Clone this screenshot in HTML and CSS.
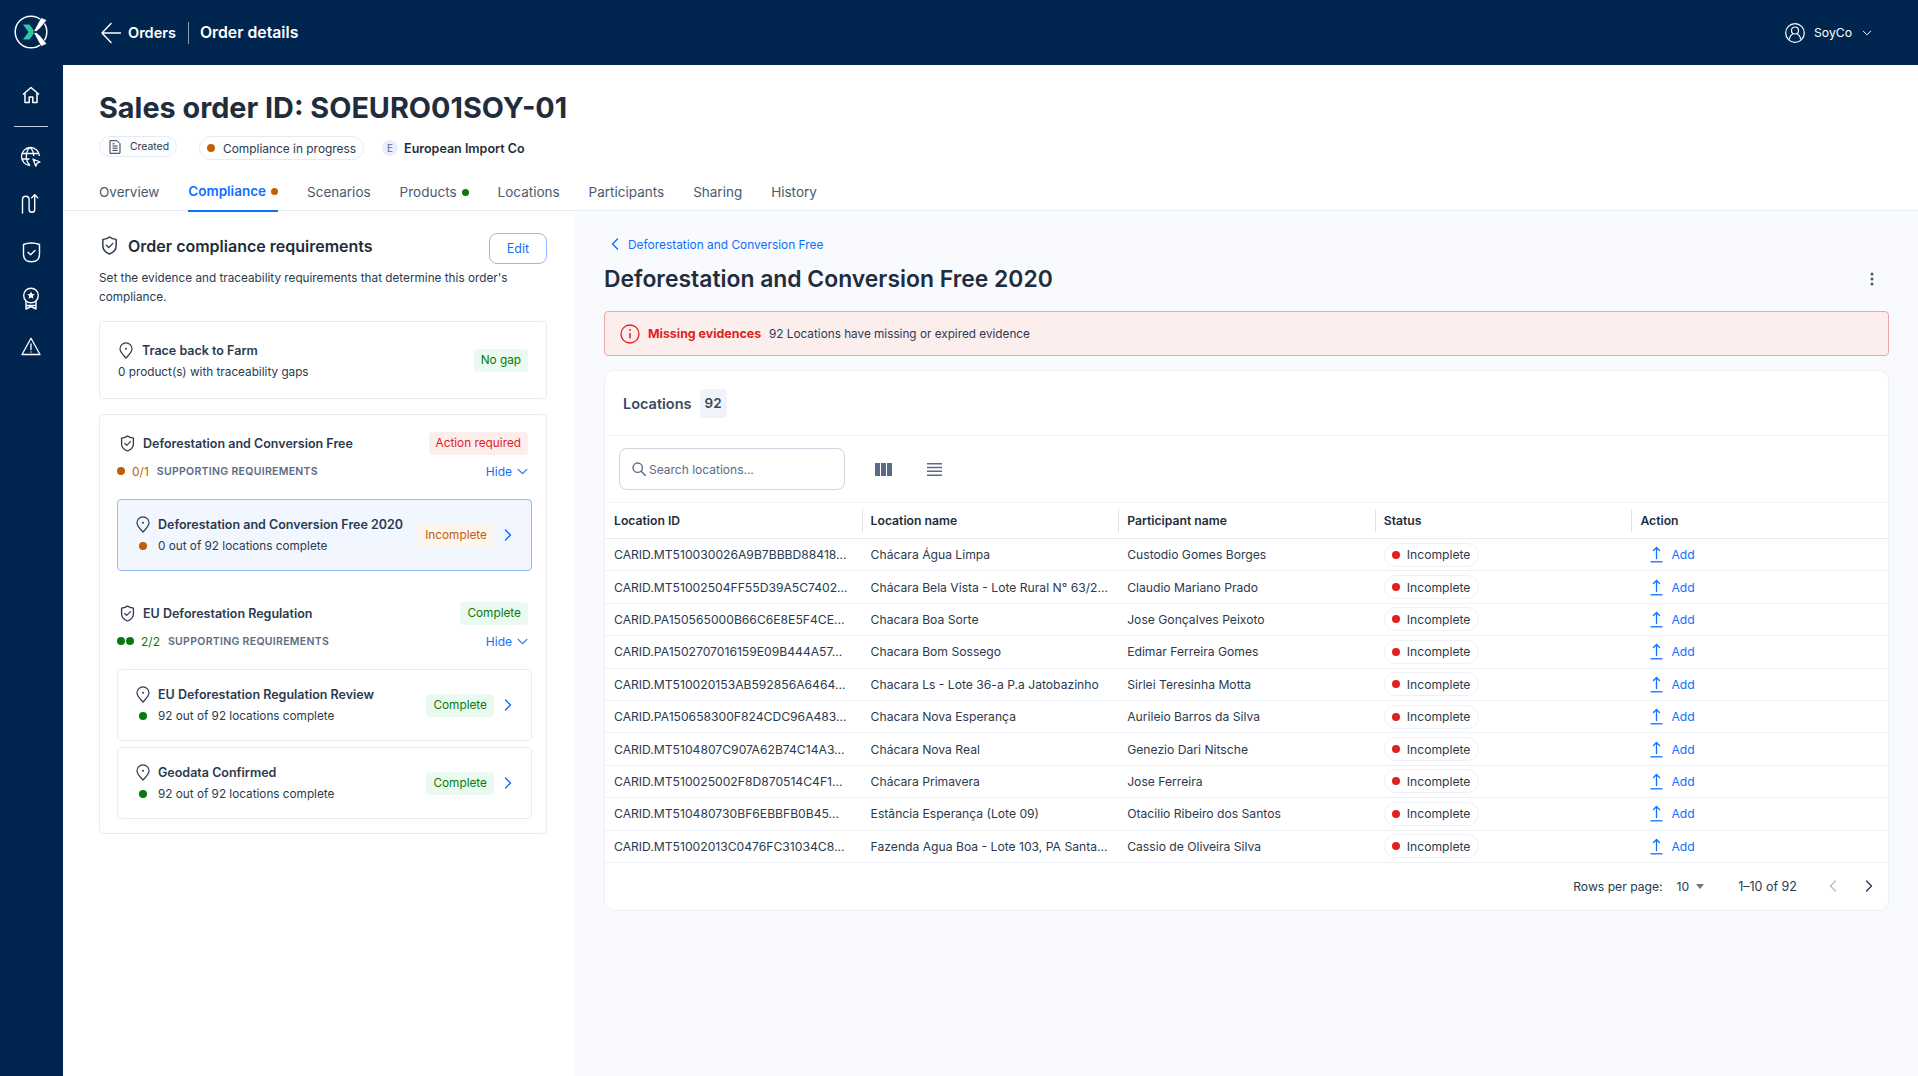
FILE: index.html
```html
<!DOCTYPE html>
<html lang="en">
<head>
    <meta charset="UTF-8">
    <meta name="viewport" content="width=device-width, initial-scale=1.0">
    <title>Order details</title>
    <link rel="stylesheet" href="styles.css">
</head>
<body>
    <svg class="defs" width="0" height="0">
        <symbol id="i-shield" viewBox="0 0 16 18"><path d="M8 1c1.500 1.300 3.700 2 6.300 2.200v6c0 3.600-2.600 6.400-6.300 7.800-3.700-1.400-6.300-4.200-6.300-7.800v-6C4.300 3 6.500 2.300 8 1z" fill="none" stroke="currentColor" stroke-width="1.400" stroke-linejoin="round"/><path d="m5 8.800 2.200 2.200L11.200 7" fill="none" stroke="currentColor" stroke-width="1.300" stroke-linecap="round" stroke-linejoin="round"/></symbol>
        <symbol id="i-pin" viewBox="0 0 14 17"><path d="M7 16C4.500 13.300 1 10.300 1 6.800a6 6 0 0 1 12 0C13 10.300 9.500 13.300 7 16z" fill="none" stroke="currentColor" stroke-width="1.200" stroke-linejoin="round"/><circle cx="7" cy="6.800" r="1" fill="currentColor"/></symbol>
        <symbol id="i-right" viewBox="0 0 8 12"><path d="m1.500 1 5 5-5 5" fill="none" stroke="currentColor" stroke-width="1.400" stroke-linecap="round" stroke-linejoin="round"/></symbol>
        <symbol id="i-down" viewBox="0 0 12 8"><path d="m1 1.500 5 5 5-5" fill="none" stroke="currentColor" stroke-width="1.300" stroke-linecap="round" stroke-linejoin="round"/></symbol>
        <symbol id="i-upload" viewBox="0 0 13 17"><path d="M6.500 12.500V1.500M3.500 4.500l3-3 3 3" fill="none" stroke="currentColor" stroke-width="1.300" stroke-linecap="round" stroke-linejoin="round"/><path d="M.5 15.800h12" stroke="currentColor" stroke-width="1.300"/></symbol>
    </svg>

    <div class="sidebar">
        <a class="logo" href="#">
            <svg width="34" height="34" viewBox="0 0 34 34">
                <circle cx="17" cy="17" r="15.800" fill="none" stroke="#fff" stroke-width="1.500"/>
                <path d="M9 9.500h6.500l5.500 7.500-5.500 7.500H9l5.500-7.500z" fill="#2fc4a4"/>
                <path d="M27 2.500 33 5 26.500 13 22.500 16.500H19.500z" fill="#fff" stroke="#00264f" stroke-width=".8"/>
                <path d="M19.500 17.500h3L26.500 21 33 29 27 31.500z" fill="#fff" stroke="#00264f" stroke-width=".8"/>
            </svg>
        </a>
        <a class="side-icon" href="#">
            <svg width="20" height="20" viewBox="0 0 20 20" fill="none" stroke="currentColor" stroke-width="1.500" stroke-linejoin="round"><path d="M2 9.500 10 2.500l8 7M4 8v9.500h4.200V12h3.600v5.500H16V8"/></svg>
        </a>
        <div class="side-line"></div>
        <a class="side-icon" href="#">
            <svg width="22" height="22" viewBox="0 0 22 22" fill="none" stroke="currentColor" stroke-width="1.300"><path d="M10 19.500a9 9 0 1 1 9.500-9.500M1.500 7.500h17M1.500 13h8M10 1.200C7.500 3.500 6.300 7 6.300 10.500S7.500 17 10 19.500M10 1.200c2.500 2.300 3.700 5.500 3.700 8.800"/><path d="m13 13 7 3-3 1.200-1.200 3z" stroke-linejoin="round"/></svg>
        </a>
        <a class="side-icon" href="#">
            <svg width="20" height="22" viewBox="0 0 20 22" fill="none" stroke="currentColor" stroke-width="1.400" stroke-linecap="round" stroke-linejoin="round"><path d="M1.500 20V6.500a3.300 3.300 0 0 1 6.600 0V16.500a2.800 2.800 0 0 0 5.600 0V2"/><path d="m10.700 4.800 3-3 3 3"/></svg>
        </a>
        <a class="side-icon" href="#">
            <svg width="19" height="22" viewBox="0 0 19 22" fill="none" stroke="currentColor" stroke-width="1.400" stroke-linecap="round" stroke-linejoin="round"><path d="M1.500 3.500C4 2.500 6.700 2 9.500 2s5.500.5 8 1.500V13c0 4-2 6.500-4.500 7.300-2.300.5-4.700.5-7 0C3.500 19.500 1.500 17 1.500 13z"/><path d="m6 11.300 2.600 2.500 4.400-4.300"/></svg>
        </a>
        <a class="side-icon" href="#">
            <svg width="18" height="24" viewBox="0 0 18 24" fill="none" stroke="currentColor" stroke-width="1.400" stroke-linejoin="round"><circle cx="9" cy="8.500" r="7.300"/><path d="M4 14v8l5-2.500 5 2.500v-8M4 18.500h10"/><path d="m9 4.500 1.200 2.500 2.600.3-1.900 1.800.5 2.600L9 10.400l-2.400 1.300.5-2.600-1.900-1.800 2.600-.3z" fill="currentColor" stroke="none"/></svg>
        </a>
        <a class="side-icon" href="#">
            <svg width="20" height="19" viewBox="0 0 20 19" fill="none" stroke="currentColor" stroke-width="1.300" stroke-linejoin="round" stroke-linecap="round"><path d="M10 1.200 19 17.500H1z"/><path d="M10 7v5.500M10 14.800v.2"/></svg>
        </a>
    </div>

    <div class="main">
        <div class="topbar">
            <a class="back" href="#">
                <svg width="20" height="22" viewBox="0 0 20 22" fill="none" stroke="currentColor" stroke-width="1.400" stroke-linecap="round" stroke-linejoin="round"><path d="M19.500 11H1M10 1.500 1 11l9 9.500"/></svg>
                <span>Orders</span>
            </a>
            <span class="top-divider"></span>
            <span class="top-title">Order details</span>
            <div class="user">
                <svg width="20" height="20" viewBox="0 0 20 20" fill="none" stroke="currentColor" stroke-width="1.200"><circle cx="10" cy="10" r="9.300"/><circle cx="10" cy="7.500" r="3.500"/><path d="M4.300 16.500c.5-3 2-5 3.700-5.500M15.700 16.500c-.5-3-2-5-3.700-5.500"/></svg>
                <span>SoyCo</span>
                <svg class="user-chev" width="10" height="6" viewBox="0 0 12 8"><use href="#i-down"/></svg>
            </div>
        </div>

        <div class="order-head">
            <h1>Sales order ID: SOEURO01SOY-01</h1>
            <div class="chips">
                <span class="chip chip-created">
                    <svg width="12" height="14" viewBox="0 0 12 14" fill="none" stroke="currentColor" stroke-width="1"><path d="M1 .7h7l3 3v9.600H1zM3.500 6h5M3.500 8.200h5M3.500 10.400h5M3.500 3.800h2"/></svg>
                    Created
                </span>
                <span class="chip chip-progress"><i class="dot dot-orange"></i>Compliance in progress</span>
                <span class="org"><span class="org-mark">E</span><b>European Import Co</b></span>
            </div>
            <div class="tabs">
                <a href="#">Overview</a>
                <a class="active" href="#">Compliance<i class="dot dot-orange"></i></a>
                <a href="#">Scenarios</a>
                <a href="#">Products<i class="dot dot-green"></i></a>
                <a href="#">Locations</a>
                <a href="#">Participants</a>
                <a href="#">Sharing</a>
                <a href="#">History</a>
            </div>
        </div>

        <div class="columns">
            <div class="left">
                <div class="left-head">
                    <svg class="ic-dark" width="17" height="19"><use href="#i-shield"/></svg>
                    <h3>Order compliance requirements</h3>
                    <button class="edit">Edit</button>
                </div>
                <p class="intro">Set the evidence and traceability requirements that determine this order's compliance.</p>

                <div class="card farm">
                    <div class="farm-text">
                        <div class="farm-title"><svg class="ic-dark" width="14" height="17"><use href="#i-pin"/></svg><b>Trace back to Farm</b></div>
                        <div class="farm-sub">0 product(s) with traceability gaps</div>
                    </div>
                    <span class="tag tag-green">No gap</span>
                </div>

                <div class="card reqs">
                    <div class="req-head">
                        <svg class="ic-dark" width="15" height="17"><use href="#i-shield"/></svg>
                        <b>Deforestation and Conversion Free</b>
                        <span class="tag tag-red">Action required</span>
                    </div>
                    <div class="req-meta">
                        <i class="dot dot-orange"></i><span class="count txt-orange">0/1</span>
                        <span class="meta-label">SUPPORTING REQUIREMENTS</span>
                        <a class="hide" href="#">Hide<svg width="11" height="7"><use href="#i-down"/></svg></a>
                    </div>
                    <div class="sub-card selected">
                        <div class="sub-text">
                            <div class="sub-line"><svg class="ic-dark" width="14" height="17"><use href="#i-pin"/></svg><b>Deforestation and Conversion Free 2020</b></div>
                            <div class="sub-line"><span class="dot-cell"><i class="dot dot-orange"></i></span>0 out of 92 locations complete</div>
                        </div>
                        <span class="tag tag-orange">Incomplete</span>
                        <svg class="chev" width="8" height="12"><use href="#i-right"/></svg>
                    </div>

                    <div class="req-head second">
                        <svg class="ic-dark" width="15" height="17"><use href="#i-shield"/></svg>
                        <b>EU Deforestation Regulation</b>
                        <span class="tag tag-green">Complete</span>
                    </div>
                    <div class="req-meta">
                        <i class="dot dot-green"></i><i class="dot dot-green"></i><span class="count txt-green">2/2</span>
                        <span class="meta-label">SUPPORTING REQUIREMENTS</span>
                        <a class="hide" href="#">Hide<svg width="11" height="7"><use href="#i-down"/></svg></a>
                    </div>
                    <div class="sub-card">
                        <div class="sub-text">
                            <div class="sub-line"><svg class="ic-dark" width="14" height="17"><use href="#i-pin"/></svg><b>EU Deforestation Regulation Review</b></div>
                            <div class="sub-line"><span class="dot-cell"><i class="dot dot-green"></i></span>92 out of 92 locations complete</div>
                        </div>
                        <span class="tag tag-green">Complete</span>
                        <svg class="chev" width="8" height="12"><use href="#i-right"/></svg>
                    </div>
                    <div class="sub-card">
                        <div class="sub-text">
                            <div class="sub-line"><svg class="ic-dark" width="14" height="17"><use href="#i-pin"/></svg><b>Geodata Confirmed</b></div>
                            <div class="sub-line"><span class="dot-cell"><i class="dot dot-green"></i></span>92 out of 92 locations complete</div>
                        </div>
                        <span class="tag tag-green">Complete</span>
                        <svg class="chev" width="8" height="12"><use href="#i-right"/></svg>
                    </div>
                </div>
            </div>

            <div class="right">
                <a class="crumb" href="#"><svg width="8" height="12" viewBox="0 0 8 12"><path d="M6.500 1l-5 5 5 5" fill="none" stroke="currentColor" stroke-width="1.400" stroke-linecap="round" stroke-linejoin="round"/></svg>Deforestation and Conversion Free</a>
                <div class="right-title">
                    <h2>Deforestation and Conversion Free 2020</h2>
                    <svg class="kebab" width="4" height="14" viewBox="0 0 4 14" fill="#4a5a70"><circle cx="2" cy="2" r="1.500"/><circle cx="2" cy="7" r="1.500"/><circle cx="2" cy="12" r="1.500"/></svg>
                </div>
                <div class="alert">
                    <svg width="20" height="20" viewBox="0 0 20 20" fill="none" stroke="#e0211c" stroke-width="1.300"><circle cx="10" cy="10" r="9"/><path d="M10 9v5.500" stroke-width="1.500"/><circle cx="10" cy="6" r=".9" fill="#e0211c" stroke="none"/></svg>
                    <b>Missing evidences</b>
                    <span>92 Locations have missing or expired evidence</span>
                </div>

                <div class="table-card">
                    <div class="table-top">
                        <span>Locations</span><span class="num">92</span>
                    </div>
                    <div class="tools">
                        <div class="search">
                            <svg width="14" height="14" viewBox="0 0 14 14" fill="none" stroke="#5b6b85" stroke-width="1.400"><circle cx="5.700" cy="5.700" r="4.700"/><path d="m9.200 9.200 4.200 4.200" stroke-linecap="round"/></svg>
                            <span>Search locations...</span>
                        </div>
                        <svg class="tool-cols" width="17" height="13" viewBox="0 0 17 13" fill="#5b6b85"><path d="M0 0h5v13H0zM6 0h5v13H6zM12 0h5v13h-5z"/></svg>
                        <svg class="tool-rows" width="15" height="13" viewBox="0 0 15 13" fill="#5b6b85"><path d="M0 0h15v1.500H0zM0 3.800h15v1.500H0zM0 7.600h15v1.500H0zM0 11.400h15v1.500H0z"/></svg>
                    </div>
                    <table>
                        <thead>
                            <tr><th>Location ID</th><th>Location name</th><th>Participant name</th><th>Status</th><th>Action</th></tr>
                        </thead>
                        <tbody>
                            <tr><td>CARID.MT510030026A9B7BBBD88418…</td><td>Chácara Água Limpa</td><td>Custodio Gomes Borges</td><td><span class="status"><i class="dot dot-red"></i>Incomplete</span></td><td><a class="add" href="#"><svg width="13" height="17"><use href="#i-upload"/></svg>Add</a></td></tr>
                            <tr><td>CARID.MT51002504FF55D39A5C7402…</td><td>Chácara Bela Vista - Lote Rural N° 63/2…</td><td>Claudio Mariano Prado</td><td><span class="status"><i class="dot dot-red"></i>Incomplete</span></td><td><a class="add" href="#"><svg width="13" height="17"><use href="#i-upload"/></svg>Add</a></td></tr>
                            <tr><td>CARID.PA150565000B66C6E8E5F4CE…</td><td>Chacara Boa Sorte</td><td>Jose Gonçalves Peixoto</td><td><span class="status"><i class="dot dot-red"></i>Incomplete</span></td><td><a class="add" href="#"><svg width="13" height="17"><use href="#i-upload"/></svg>Add</a></td></tr>
                            <tr><td>CARID.PA1502707016159E09B444A57…</td><td>Chacara Bom Sossego</td><td>Edimar Ferreira Gomes</td><td><span class="status"><i class="dot dot-red"></i>Incomplete</span></td><td><a class="add" href="#"><svg width="13" height="17"><use href="#i-upload"/></svg>Add</a></td></tr>
                            <tr><td>CARID.MT510020153AB592856A6464…</td><td>Chacara Ls - Lote 36-a P.a Jatobazinho</td><td>Sirlei Teresinha Motta</td><td><span class="status"><i class="dot dot-red"></i>Incomplete</span></td><td><a class="add" href="#"><svg width="13" height="17"><use href="#i-upload"/></svg>Add</a></td></tr>
                            <tr><td>CARID.PA150658300F824CDC96A483…</td><td>Chacara Nova Esperança</td><td>Aurileio Barros da Silva</td><td><span class="status"><i class="dot dot-red"></i>Incomplete</span></td><td><a class="add" href="#"><svg width="13" height="17"><use href="#i-upload"/></svg>Add</a></td></tr>
                            <tr><td>CARID.MT5104807C907A62B74C14A3…</td><td>Chácara Nova Real</td><td>Genezio Dari Nitsche</td><td><span class="status"><i class="dot dot-red"></i>Incomplete</span></td><td><a class="add" href="#"><svg width="13" height="17"><use href="#i-upload"/></svg>Add</a></td></tr>
                            <tr><td>CARID.MT510025002F8D870514C4F1…</td><td>Chácara Primavera</td><td>Jose Ferreira</td><td><span class="status"><i class="dot dot-red"></i>Incomplete</span></td><td><a class="add" href="#"><svg width="13" height="17"><use href="#i-upload"/></svg>Add</a></td></tr>
                            <tr><td>CARID.MT510480730BF6EBBFB0B45…</td><td>Estância Esperança (Lote 09)</td><td>Otacilio Ribeiro dos Santos</td><td><span class="status"><i class="dot dot-red"></i>Incomplete</span></td><td><a class="add" href="#"><svg width="13" height="17"><use href="#i-upload"/></svg>Add</a></td></tr>
                            <tr><td>CARID.MT51002013C0476FC31034C8…</td><td>Fazenda Agua Boa - Lote 103, PA Santa…</td><td>Cassio de Oliveira Silva</td><td><span class="status"><i class="dot dot-red"></i>Incomplete</span></td><td><a class="add" href="#"><svg width="13" height="17"><use href="#i-upload"/></svg>Add</a></td></tr>
                        </tbody>
                    </table>
                    <div class="pager">
                        <span>Rows per page:</span>
                        <span class="per-page">10<i class="caret"></i></span>
                        <span class="range">1–10 of 92</span>
                        <svg class="prev" width="8" height="12" viewBox="0 0 8 12"><path d="M6.500 1l-5 5 5 5" fill="none" stroke="currentColor" stroke-width="1.400" stroke-linecap="round" stroke-linejoin="round"/></svg>
                        <svg class="next" width="8" height="12"><use href="#i-right"/></svg>
                    </div>
                </div>
            </div>
        </div>
    </div>
</body>
</html>
```

FILE: styles.css
```css
* {
    box-sizing: border-box;
}

html, body {
    height: 100%;
}

body {
    display: flex;
    margin: 0;
    overflow: hidden;
    font-family: Inter, "Noto Sans", sans-serif;
    font-size: 13px;
    color: #2b3a4e;
    background: #fff;
}

a {
    text-decoration: none;
    color: inherit;
}

i {
    font-style: normal;
}

svg {
    display: block;
    flex: none;
}

.defs {
    position: absolute;
}

.dot {
    display: inline-block;
    flex: none;
    width: 8px;
    height: 8px;
    border-radius: 50%;
}

.dot-orange { background: #c25e08; }
.dot-green { background: #067a0e; }
.dot-red { background: #e0211c; }
.txt-orange { color: #c25e08; }
.txt-green { color: #067a0e; }

/* sidebar */
.sidebar {
    display: flex;
    flex: none;
    flex-direction: column;
    align-items: center;
    width: 63px;
    height: 100%;
    padding-right: 1px;
    background: #00264f;
    color: #fff;
}

.logo {
    margin-top: 15px;
    margin-bottom: 34px;
}

.side-icon {
    display: flex;
    align-items: center;
    justify-content: center;
    height: 24px;
    margin-bottom: 23px;
}

.side-icon:nth-of-type(4) {
    margin-bottom: 24px;
}

.side-line {
    width: 34px;
    height: 1px;
    margin: -4px 0 18px;
    background: #c4cedb;
}

/* top bar */
.main {
    display: flex;
    flex: 1;
    flex-direction: column;
    min-width: 0;
}

.topbar {
    display: flex;
    flex: none;
    align-items: center;
    height: 65px;
    padding: 0 46px 0 38px;
    background: #00264f;
    color: #fff;
}

.back {
    display: flex;
    align-items: center;
    gap: 7px;
    font-size: 14.5px;
    font-weight: 600;
}

.top-divider {
    width: 1px;
    height: 22px;
    margin: 0 11px 0 12px;
    background: #8a9ab0;
}

.top-title {
    font-size: 15.8px;
    font-weight: 600;
}

.user {
    display: flex;
    align-items: center;
    margin-left: auto;
    font-size: 12.2px;
}

.user span {
    margin: 0 10px 0 9px;
}

/* order header */
.order-head {
    flex: none;
    height: 146px;
    padding: 25px 36px 0;
    border-bottom: 1px solid #e8edf5;
}

h1 {
    margin: 0;
    font-size: 28.8px;
    line-height: 36px;
    font-weight: 700;
    color: #1f2d3d;
}

.chips {
    display: flex;
    align-items: center;
    height: 24px;
    margin-top: 10px;
}

.chip {
    display: flex;
    align-items: center;
    border: 1px solid #e6ebf3;
    border-radius: 12px;
}

.chip-created {
    gap: 9px;
    height: 21px;
    margin-top: -3px;
    padding: 0 7px 0 9px;
    font-size: 10.4px;
    background: #fcfdff;
}

.chip-progress {
    gap: 8px;
    height: 24px;
    margin-left: 22px;
    padding: 0 7px;
    font-size: 11.9px;
}

.org {
    display: flex;
    align-items: center;
    gap: 6px;
    margin-left: 18px;
    font-size: 12.5px;
}

.org b {
    font-weight: 600;
    color: #1f2d3d;
}

.org-mark {
    width: 16px;
    height: 16px;
    border-radius: 50%;
    background: #e8eefa;
    color: #5b6b85;
    font-size: 10px;
    line-height: 16px;
    text-align: center;
}

.tabs {
    display: flex;
    gap: 29px;
    margin-top: 12px;
}

.tabs a {
    display: flex;
    align-items: center;
    height: 40px;
    font-size: 13.5px;
    color: #4a5a70;
}

.tabs .dot {
    margin-left: 5px;
    width: 7px;
    height: 7px;
}

.tabs .active {
    border-bottom: 2px solid #0f6fff;
    font-weight: 600;
    color: #0f6fff;
}

/* left column */
.columns {
    display: flex;
    flex: 1;
    min-height: 0;
}

.left {
    flex: none;
    width: 512px;
    padding: 21px 28px 0 36px;
}

.left-head {
    display: flex;
    align-items: center;
    height: 32px;
    padding-left: 2px;
}

.left-head h3 {
    margin: 0 0 5px 10px;
    font-size: 16px;
    font-weight: 600;
    color: #1f2d3d;
}

.left-head svg {
    margin-bottom: 5px;
}

.edit {
    width: 58px;
    height: 31px;
    margin-left: auto;
    border: 1px solid #90b8f8;
    border-radius: 8px;
    background: #fff;
    font: inherit;
    font-size: 12.5px;
    color: #0f6fff;
}

.intro {
    width: 430px;
    margin: 5px 0 0;
    font-size: 11.75px;
    line-height: 19px;
}

.card {
    border: 1px solid #e8edf5;
    border-radius: 4px;
    background: #fff;
}

.farm {
    display: flex;
    align-items: center;
    justify-content: space-between;
    height: 78px;
    margin-top: 14px;
    padding: 0 18px;
}

.farm-title {
    display: flex;
    align-items: center;
    gap: 9px;
    padding-left: 1px;
}

.farm-title b,
.req-head b,
.sub-line b {
    font-size: 12.5px;
    font-weight: 600;
    color: #2b3a4e;
}

.farm-sub {
    margin-top: 6px;
    font-size: 11.75px;
}

.tag {
    flex: none;
    padding: 0 7px;
    border-radius: 4px;
    font-size: 11.8px;
    line-height: 23px;
}

.tag-green { background: #eafaf0; color: #067a0e; }
.tag-red { background: #fdeeee; color: #e0211c; }
.tag-orange { background: #fdf6ee; color: #c25e08; }

.reqs {
    height: 420px;
    margin-top: 15px;
    padding: 16px 14px 0 17px;
}

.req-head {
    display: flex;
    align-items: center;
    gap: 8px;
    height: 25px;
    padding-left: 3px;
}

.req-head.second {
    margin-top: 30px;
}

.req-head .tag {
    margin-left: auto;
    margin-right: 4px;
}

.req-meta {
    display: flex;
    align-items: center;
    gap: 1px;
    height: 22px;
    margin-top: 4px;
}

.count {
    margin-left: 6px;
    font-size: 12px;
}

.meta-label {
    margin-left: 7px;
    font-size: 10.5px;
    font-weight: 600;
    letter-spacing: .3px;
    color: #5b6b85;
}

.hide {
    display: flex;
    align-items: center;
    gap: 5px;
    margin-left: auto;
    margin-right: 4px;
    font-size: 12px;
    color: #0f6fff;
}

.sub-card {
    display: flex;
    align-items: center;
    height: 72px;
    margin-top: 6px;
    padding: 0 19px 0 18px;
    border: 1px solid #e8edf5;
    border-radius: 4px;
}

.req-meta + .sub-card {
    margin-top: 17px;
}

.sub-card.selected {
    background: #f1f6ff;
    border-color: #93bcf5;
}

.sub-text {
    flex: 1;
}

.sub-line {
    display: flex;
    align-items: center;
    gap: 8px;
    height: 22px;
    font-size: 11.75px;
}

.dot-cell {
    display: flex;
    justify-content: center;
    width: 14px;
}

.chev {
    margin-left: 10px;
    color: #0f6fff;
}

/* right column */
.right {
    flex: 1;
    min-width: 0;
    padding: 25px 29px 0;
    background: #f8fafe;
}

.crumb {
    display: flex;
    align-items: center;
    gap: 9px;
    height: 16px;
    padding-left: 7px;
    font-size: 11.9px;
    color: #0f6fff;
}

.right-title {
    display: flex;
    align-items: center;
    justify-content: space-between;
    height: 32px;
    margin-top: 11px;
    padding-right: 15px;
}

h2 {
    margin: 0;
    font-size: 22.9px;
    font-weight: 600;
    color: #1f2d3d;
}

.alert {
    display: flex;
    align-items: center;
    height: 45px;
    margin-top: 16px;
    padding: 0 15px;
    border: 1px solid #f3a5a5;
    border-radius: 4px;
    background: #fdeeee;
    font-size: 11.75px;
}

.alert b {
    margin: 0 8px;
    font-size: 12.4px;
    font-weight: 700;
    color: #e0211c;
}

.table-card {
    margin-top: 14px;
    border: 1px solid #edf0f6;
    border-radius: 10px;
    background: #fff;
}

.table-top {
    display: flex;
    align-items: center;
    gap: 8px;
    height: 65px;
    padding: 0 18px;
    border-bottom: 1px solid #f2f4f8;
    font-size: 14.5px;
    font-weight: 600;
    color: #3a4a60;
}

.num {
    padding: 0 5px;
    border-radius: 4px;
    background: #f0f4fa;
    font-size: 13.5px;
    line-height: 29px;
}

.tools {
    display: flex;
    align-items: center;
    height: 66px;
    padding-left: 14px;
}

.search {
    display: flex;
    align-items: center;
    gap: 3px;
    width: 226px;
    height: 42px;
    padding-left: 12px;
    border: 1px solid #ccd5e0;
    border-radius: 8px;
    font-size: 12px;
    color: #5b6b85;
}

.tool-cols {
    margin-left: 30px;
}

.tool-rows {
    margin-left: 35px;
}

table {
    width: 100%;
    table-layout: fixed;
    border-collapse: collapse;
}

th {
    position: relative;
    height: 36px;
    padding: 0 0 0 9px;
    border-top: 1px solid #f2f4f8;
    border-bottom: 1px solid #e8edf5;
    font-size: 12.2px;
    font-weight: 600;
    text-align: left;
    color: #1f2d3d;
}

th + th::before {
    content: "";
    position: absolute;
    left: 0;
    top: 6px;
    bottom: 6px;
    width: 1px;
    background: #dde3ec;
}

td {
    height: 32.4px;
    padding: 0 0 0 9px;
    border-bottom: 1px solid #edf0f6;
    font-size: 12.15px;
    white-space: nowrap;
    overflow: hidden;
}

.status {
    display: inline-flex;
    align-items: center;
    gap: 7px;
    height: 24px;
    padding: 0 8px 0 7px;
    border: 1px solid #edf0f6;
    border-radius: 12px;
}

.add {
    display: flex;
    align-items: center;
    gap: 8px;
    padding-left: 10px;
    color: #0f6fff;
}

.pager {
    display: flex;
    align-items: center;
    height: 47px;
    padding-right: 15px;
    justify-content: flex-end;
    font-size: 12.15px;
}

.per-page {
    display: flex;
    align-items: center;
    gap: 7px;
    margin-left: 14px;
}

.caret {
    width: 0;
    height: 0;
    border-left: 4.500px solid transparent;
    border-right: 4.500px solid transparent;
    border-top: 5px solid #6b7686;
}

.range {
    margin-left: 34px;
    font-size: 12.5px;
}

.prev {
    margin-left: 32px;
    color: #b5bdc8;
}

.next {
    margin-left: 28px;
    color: #2b3a4e;
}
```
